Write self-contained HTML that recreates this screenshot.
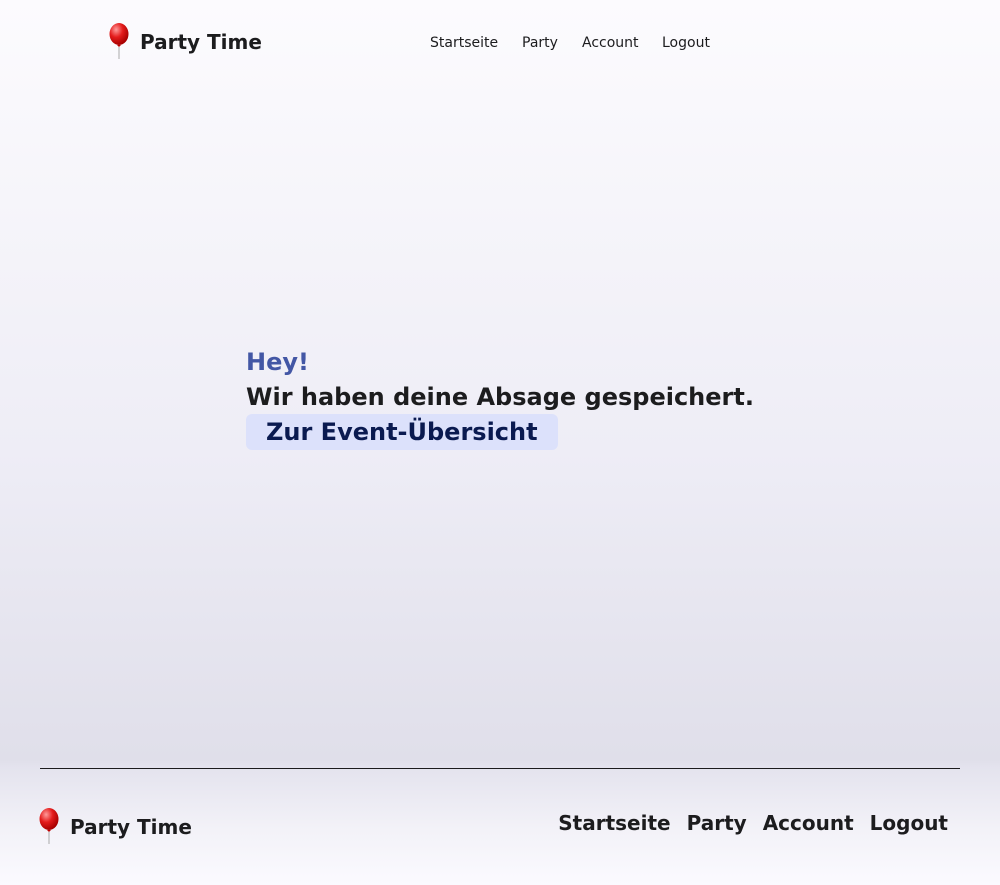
<!DOCTYPE html>
<html><head><meta charset="utf-8"><style>
*{margin:0;padding:0;box-sizing:border-box}
body{width:1000px;height:885px;overflow:hidden;font-family:"DejaVu Sans","Liberation Sans",sans-serif;background:linear-gradient(#fcfbfe 0px,#f6f5fa 200px,#eeedf6 450px,#e0dfea 760px,#e4e3ee 768px,#f3f2f8 830px,#fbfaff 885px);position:relative;color:#1c1c1e}
.a{position:absolute;white-space:nowrap}
.logo{font-weight:bold;font-size:20px}
.nav{font-size:14px}
</style></head><body>
<svg class="a" style="left:108px;top:23px" width="22" height="36" viewBox="0 0 22 36"><defs><radialGradient id="g" cx=".35" cy=".3" r=".7"><stop offset="0" stop-color="#ff9a9a"/><stop offset=".5" stop-color="#e41c1c"/><stop offset="1" stop-color="#a80000"/></radialGradient></defs><ellipse cx="11" cy="11" rx="9.5" ry="11" fill="url(#g)"/><path d="M9 22h4l-2 2z" fill="#b00"/><path d="M11 24v12" stroke="#aaa" stroke-width="1"/></svg>
<div class="a logo" style="left:140px;top:30px">Party Time</div>
<div class="a nav" style="left:430px;top:35px">Startseite</div>
<div class="a nav" style="left:522px;top:35px">Party</div>
<div class="a nav" style="left:582px;top:35px">Account</div>
<div class="a nav" style="left:662px;top:35px">Logout</div>

<div class="a" style="left:246px;top:348px;font-size:24px;font-weight:bold;color:#4357a5">Hey!</div>
<div class="a" style="left:246px;top:383px;font-size:24px;font-weight:bold">Wir haben deine Absage gespeichert.</div>
<div class="a" style="left:246px;top:414px;width:312px;height:36px;background:#dce1fb;border-radius:6px;font-size:24px;font-weight:bold;color:#0a1a50;padding-left:20px;line-height:36px">Zur Event-Übersicht</div>

<div class="a" style="left:40px;top:768px;width:920px;height:1px;background:#1c1c1e"></div>
<svg class="a" style="left:38px;top:808px" width="22" height="36" viewBox="0 0 22 36"><ellipse cx="11" cy="11" rx="9.5" ry="11" fill="url(#g)"/><path d="M9 22h4l-2 2z" fill="#b00"/><path d="M11 24v12" stroke="#aaa" stroke-width="1"/></svg>
<div class="a logo" style="left:70px;top:815px">Party Time</div>
<div class="a" style="right:52px;top:811px;font-size:20px;font-weight:bold;display:flex;gap:16px"><span>Startseite</span><span>Party</span><span>Account</span><span>Logout</span></div>
</body></html>
